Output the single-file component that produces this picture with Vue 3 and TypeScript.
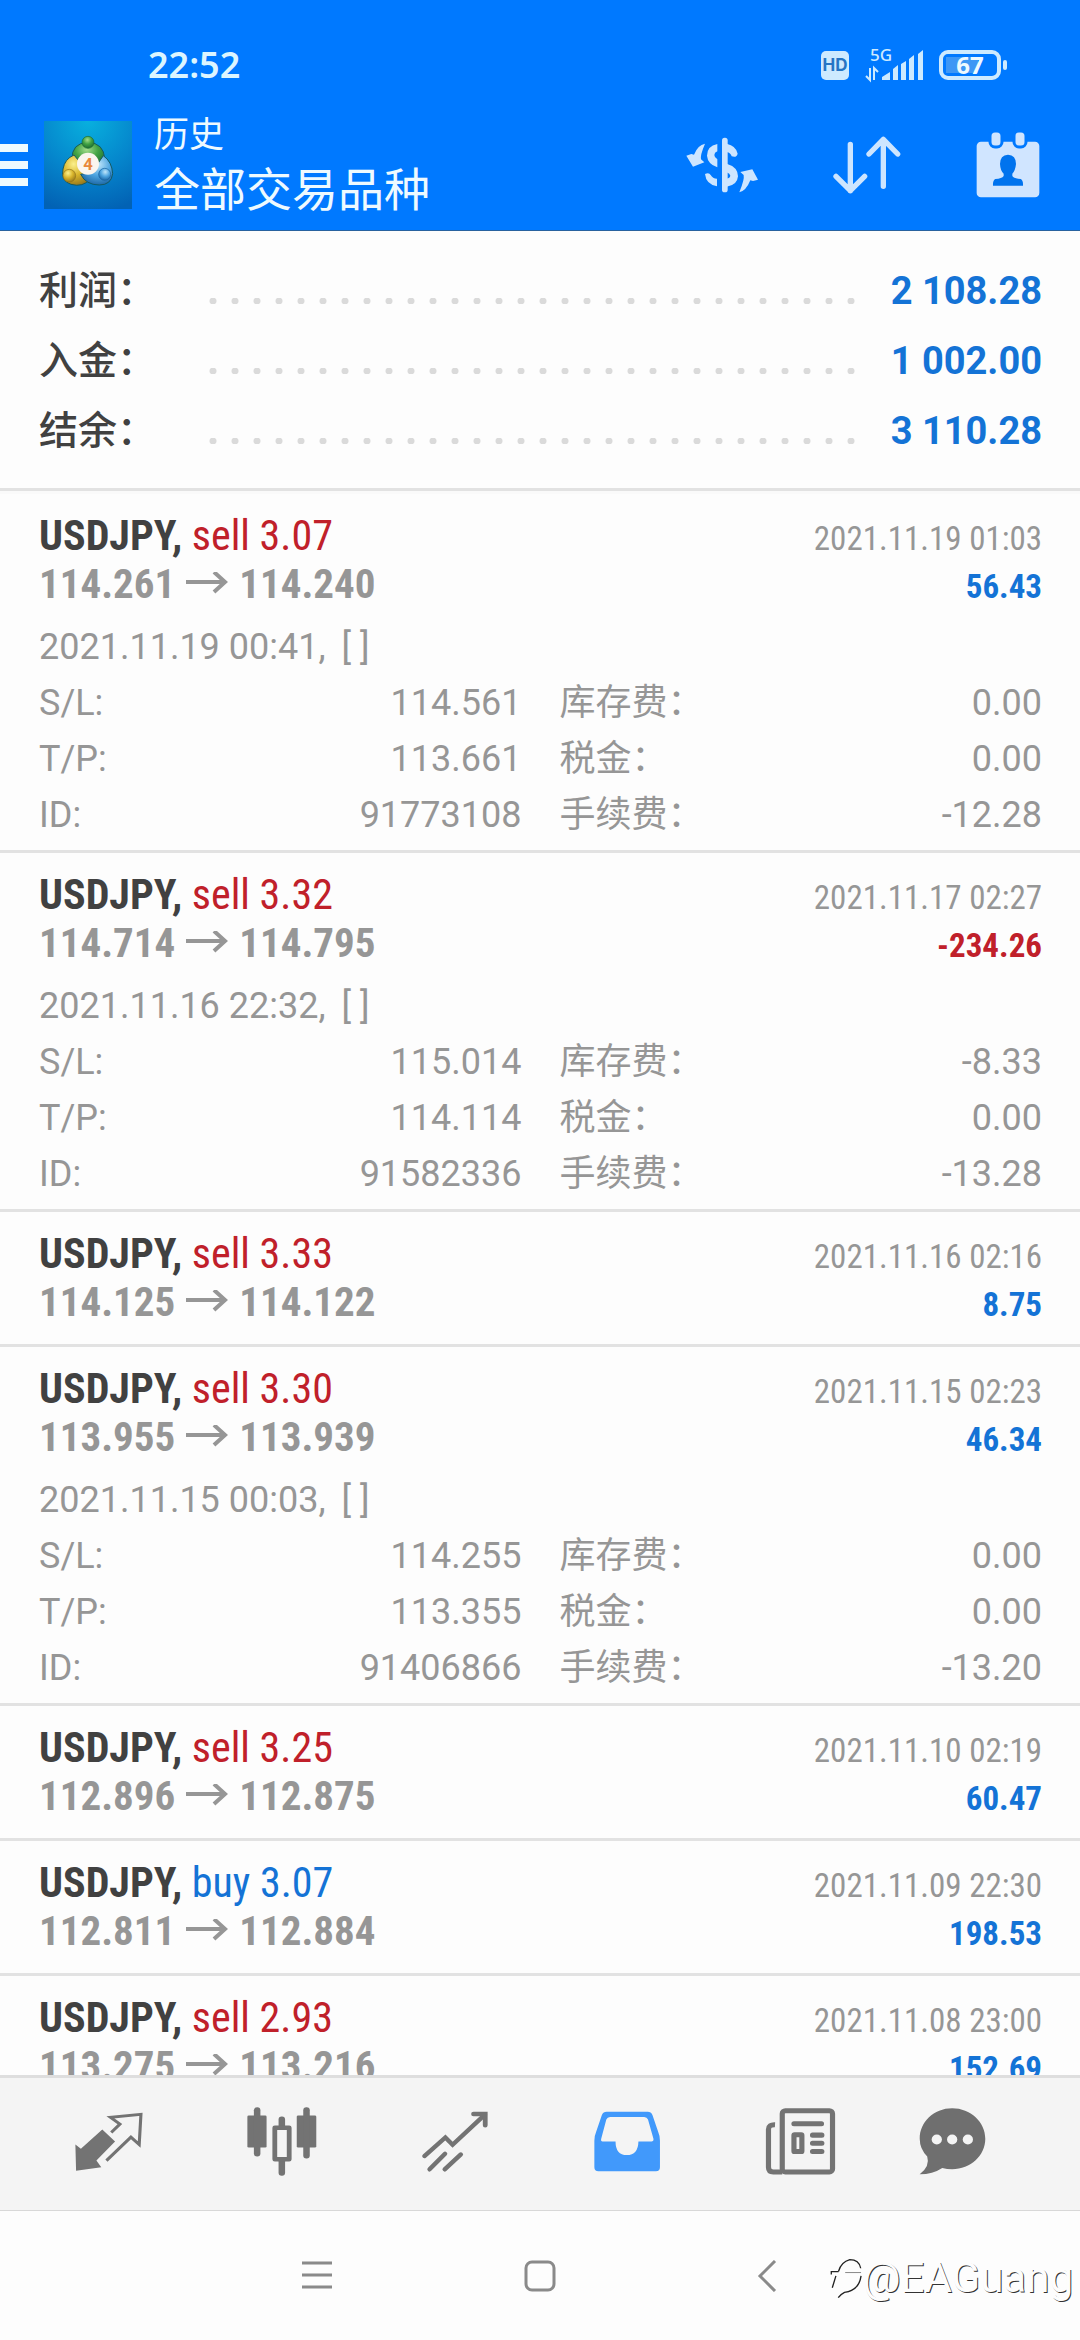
<script setup lang="ts">
interface Detail {
  opened: string
  sl: string
  tp: string
  id: string
  swap: string
  tax: string
  fee: string
}
interface Deal {
  side: 'buy' | 'sell'
  volume: string
  from: string
  to: string
  closed: string
  profit: string
  detail?: Detail
}

const summary = [
  { label: '利润：', value: '2 108.28' },
  { label: '入金：', value: '1 002.00' },
  { label: '结余：', value: '3 110.28' },
]

const deals: Deal[] = [
  {
    side: 'sell', volume: '3.07', from: '114.261', to: '114.240', closed: '2021.11.19 01:03', profit: '56.43',
    detail: { opened: '2021.11.19 00:41,', sl: '114.561', tp: '113.661', id: '91773108', swap: '0.00', tax: '0.00', fee: '-12.28' },
  },
  {
    side: 'sell', volume: '3.32', from: '114.714', to: '114.795', closed: '2021.11.17 02:27', profit: '-234.26',
    detail: { opened: '2021.11.16 22:32,', sl: '115.014', tp: '114.114', id: '91582336', swap: '-8.33', tax: '0.00', fee: '-13.28' },
  },
  { side: 'sell', volume: '3.33', from: '114.125', to: '114.122', closed: '2021.11.16 02:16', profit: '8.75' },
  {
    side: 'sell', volume: '3.30', from: '113.955', to: '113.939', closed: '2021.11.15 02:23', profit: '46.34',
    detail: { opened: '2021.11.15 00:03,', sl: '114.255', tp: '113.355', id: '91406866', swap: '0.00', tax: '0.00', fee: '-13.20' },
  },
  { side: 'sell', volume: '3.25', from: '112.896', to: '112.875', closed: '2021.11.10 02:19', profit: '60.47' },
  { side: 'buy', volume: '3.07', from: '112.811', to: '112.884', closed: '2021.11.09 22:30', profit: '198.53' },
  { side: 'sell', volume: '2.93', from: '113.275', to: '113.216', closed: '2021.11.08 23:00', profit: '152.69' },
]

function rows(d: Detail) {
  return [
    ['S/L:', d.sl, '库存费：', d.swap],
    ['T/P:', d.tp, '税金：', d.tax],
    ['ID:', d.id, '手续费：', d.fee],
  ]
}
</script>

<template>
  <div class="app">
    <header class="top">
      <div class="status">
        <time class="clock">22:52</time>
        <div class="indicators">
          <span class="hd">HD</span>
          <svg class="signal" width="58" height="48" viewBox="0 -8 58 48" aria-label="5G">
            <text x="5" y="12" class="net">5G</text>
            <path d="M5 19v12l-4-4M9 31V19l4 4" fill="none" stroke="#cdeaff" stroke-width="2" />
            <path d="M17 31v-3l8-5v8zM28 31V20l5-4v15zM36 31V15l5-3v19zM44 31V10l5-4v25zM53 31V5l5-4v30z" fill="#cdeaff" />
          </svg>
          <span class="battery"><span class="level">67</span></span>
        </div>
      </div>
      <div class="bar">
        <button class="menu" aria-label="菜单"><i></i><i></i><i></i></button>
        <svg class="logo" width="88" height="88" viewBox="0 0 264 264" aria-hidden="true">
          <defs>
            <radialGradient id="sky" cx="50%" cy="0%" r="105%">
              <stop offset="0" stop-color="#08b0de" />
              <stop offset=".55" stop-color="#0585cc" />
              <stop offset="1" stop-color="#0262b4" />
            </radialGradient>
            <radialGradient id="green" cx="45%" cy="30%" r="70%">
              <stop offset="0" stop-color="#a4dc8c" /><stop offset=".5" stop-color="#42a344" /><stop offset="1" stop-color="#1c6c33" />
            </radialGradient>
            <radialGradient id="gold" cx="40%" cy="30%" r="75%">
              <stop offset="0" stop-color="#fbf08c" /><stop offset=".5" stop-color="#d9b52c" /><stop offset="1" stop-color="#92741c" />
            </radialGradient>
            <radialGradient id="blue" cx="55%" cy="30%" r="75%">
              <stop offset="0" stop-color="#c0e6fa" /><stop offset=".5" stop-color="#4ea5e0" /><stop offset="1" stop-color="#17609f" />
            </radialGradient>
          </defs>
          <rect width="264" height="264" fill="url(#sky)" />
          <g stroke="#155a62" stroke-width="3">
            <path d="M84 116q-2-50 48-52q48 2 50 50q0 14-10 24l-38-10l-32 10q-16-8-18-22z" fill="url(#green)" />
            <path d="M90 102q-28 12-33 42q-8 36 24 46q36 10 58-16q-22-18-26-44z" fill="url(#gold)" />
            <path d="M178 104q26 18 28 54q-4 34-40 34q-40 0-56-32q38-4 50-30z" fill="url(#blue)" />
          </g>
          <circle cx="132" cy="64" r="18" fill="url(#green)" stroke="#1c6c33" stroke-width="2" />
          <circle cx="76" cy="164" r="19" fill="url(#gold)" stroke="#92741c" stroke-width="2" />
          <circle cx="182" cy="160" r="18" fill="url(#blue)" stroke="#17609f" stroke-width="2" />
          <circle cx="132" cy="128" r="33" fill="#fbf5ee" />
          <text x="132" y="146" class="four">4</text>
        </svg>
        <div class="heading">
          <p class="section">历史</p>
          <h1>全部交易品种</h1>
        </div>
        <div class="actions">
          <button aria-label="货币">
            <svg width="72" height="56" viewBox="78 76 216 168" fill="#cde5ff">
              <path d="M135 96q-22 4-33 33l-8-2-15 5 20 33 34-13-10-9q-3-12 12-47z" />
              <path d="M238 242q20-4 33-36l8 2 15-4-17-31-36 8 10 9q3 13-13 52z" />
              <rect x="186" y="78" width="17" height="164" rx="8" />
              <path d="M172 97q-31 6-31 35q2 25 31 35v-24q-9-5-9-13q0-7 9-11zM135 187q12-6 17 3q6 11 19 11v23q-33-6-36-37z" />
              <path d="M200 96q28 6 33 30q-3 13-18 8q-3-11-15-13zM200 156q34 10 34 38q-2 27-34 31v-24q10-2 11-9q-1-6-11-10z" />
            </svg>
          </button>
          <button aria-label="排序">
            <svg width="68" height="58" viewBox="514 76 204 174" fill="none" stroke="#cde5ff" stroke-width="16" stroke-linecap="round" stroke-linejoin="round">
              <path d="M566 101v139M523 197l43 43 43-43M665 227V86M622 130l43-44 43 44" />
            </svg>
          </button>
          <button aria-label="日期">
            <svg width="64" height="66" viewBox="948 64 192 198">
              <rect x="950" y="93" width="188" height="167" rx="13" fill="#d0e5ff" />
              <g fill="#d0e5ff" stroke="#0079ff" stroke-width="9">
                <rect x="990" y="61" width="36" height="48" rx="15" /><rect x="1062" y="61" width="36" height="48" rx="15" />
              </g>
              <path d="M1044 132q24 1 24 28q-2 20-11 29v7q5 8 25 9q8 4 7 20h-90q-1-16 7-20q20-1 25-9v-7q-10-9-11-29q0-27 24-28z" fill="#0073ee" />
            </svg>
          </button>
        </div>
      </div>
    </header>

    <main class="content">
      <dl class="summary">
        <div v-for="s in summary" :key="s.label" class="total">
          <dt>{{ s.label }}</dt>
          <i class="leader"></i>
          <dd>{{ s.value }}</dd>
        </div>
      </dl>

      <ul class="deals">
        <li v-for="d in deals" :key="d.closed" class="deal">
          <div class="line">
            <h2>USDJPY, <span :class="d.side">{{ d.side }} {{ d.volume }}</span></h2>
            <time class="closed">{{ d.closed }}</time>
          </div>
          <div class="line">
            <p class="prices">
              <span>{{ d.from }}</span>
              <svg width="42" height="24" viewBox="0 0 42 24" fill="none" stroke="#969696" stroke-width="4" aria-label="→">
                <path d="M0 10h39M28 0l11 10-11 10" />
              </svg>
              <span>{{ d.to }}</span>
            </p>
            <strong class="profit" :class="{ loss: d.profit.startsWith('-') }">{{ d.profit }}</strong>
          </div>
          <div v-if="d.detail" class="detail">
            <p class="opened">{{ d.detail.opened }}<span>[ ]</span></p>
            <dl v-for="r in rows(d.detail)" :key="r[0]" class="fields">
              <div><dt>{{ r[0] }}</dt><dd>{{ r[1] }}</dd></div>
              <div><dt>{{ r[2] }}</dt><dd>{{ r[3] }}</dd></div>
            </dl>
          </div>
        </li>
      </ul>
    </main>

    <nav class="tabs">
      <button aria-label="报价">
        <svg width="69" height="61" viewBox="214 455 200 182" preserveAspectRatio="none">
          <path d="M296 510l37 36-54 57 14 20-73 10-2-78 16 13z" fill="#737373" />
          <path d="M322 519l25-25-27-20 88-9-5 90-24-22-71 70" fill="none" stroke="#737373" stroke-width="9" />
        </svg>
      </button>
      <button aria-label="图表">
        <svg width="72" height="71" viewBox="712 440 210 212" preserveAspectRatio="none" fill="#737373">
          <rect x="716" y="468" width="56" height="96" rx="4" /><rect x="735" y="444" width="19" height="147" rx="9" />
          <rect x="860" y="468" width="57" height="96" rx="4" /><rect x="879" y="444" width="19" height="153" rx="9" />
          <rect x="807" y="471" width="19" height="40" rx="9" /><rect x="807" y="596" width="19" height="52" rx="9" />
          <rect x="796" y="505" width="42" height="94" fill="#f4f4f4" stroke="#737373" stroke-width="14" stroke-linejoin="round" />
        </svg>
      </button>
      <button aria-label="交易">
        <svg width="68" height="63" viewBox="1220 448 198 190" preserveAspectRatio="none" fill="none" stroke="#737373" stroke-width="13" stroke-linecap="round">
          <path d="M1230 587l61-56 21 22 94-91" /><path d="M1373 460h34v34" stroke-width="14" />
          <path d="M1245 627l45-47M1289 627l47-45" />
        </svg>
      </button>
      <button aria-label="历史" aria-current="page">
        <svg width="69" height="63" viewBox="154 448 202 190" preserveAspectRatio="none">
          <path d="M194 453h120q10 0 14 10l16 48q6 14 6 30v80q0 12-12 12H170q-12 0-12-12v-80q0-16 6-30l16-48q4-10 14-10z" fill="#4199fb" />
          <path d="M204 469h100q8 0 11 8l16 58q1 8-6 8h-38q-1 41-34 41t-33-41h-38q-6 0-4-8l15-58q3-8 11-8z" fill="#f4f4f4" />
        </svg>
      </button>
      <button aria-label="新闻">
        <svg width="73" height="69" viewBox="652 440 212 206" preserveAspectRatio="none" fill="none" stroke="#737373" stroke-width="15" stroke-linecap="round">
          <rect x="705" y="451" width="146" height="183" rx="9" />
          <path d="M684 493q-19-1-19 14v113q0 14 14 14h26" stroke-linecap="butt" />
          <path d="M739 490h80M793 524h27M793 548h27M793 573h27" />
          <rect x="739" y="523" width="23" height="50" rx="2" />
        </svg>
      </button>
      <button aria-label="信息">
        <svg width="69" height="69" viewBox="1098 440 202 206" preserveAspectRatio="none">
          <path d="M1198 444c54 0 97 41 97 91s-43 91-97 91q-15 0-29-4-28 19-66 19q31-24 22-53-22-23-22-53c0-50 41-91 95-91z" fill="#6f6f6f" />
          <g fill="#f4f4f4"><circle cx="1153" cy="537" r="15" /><circle cx="1198" cy="537" r="15" /><circle cx="1244" cy="537" r="15" /></g>
        </svg>
      </button>
    </nav>

    <footer class="system">
      <button aria-label="最近任务">
        <svg width="32" height="32" viewBox="0 0 32 32" fill="none" stroke="#8a8a8a" stroke-width="3"><path d="M1 3h30M1 15h30M1 27h30" /></svg>
      </button>
      <button aria-label="主屏幕">
        <svg width="32" height="32" viewBox="0 0 32 32" fill="none" stroke="#8a8a8a" stroke-width="3"><rect x="2" y="2" width="28" height="28" rx="6" /></svg>
      </button>
      <button aria-label="返回">
        <svg width="32" height="32" viewBox="0 0 32 32" fill="none" stroke="#8a8a8a" stroke-width="3"><path d="M28 1L13 16l15 15" /></svg>
      </button>
      <p class="mark">
        <svg width="33" height="41" viewBox="35 68 98 124" fill="none" stroke="#222" stroke-width="4" aria-hidden="true">
          <path d="M60 108q8-28 34-35q28 0 33 26M38 118v-9h22M52 122l-11 36M128 122q-6 44-50 50q-12 6-19 16" />
          <path d="M80 112h48" stroke="#888" stroke-width="3" />
        </svg>
        <span>@EAGuang</span>
      </p>
    </footer>
  </div>
</template>

<style>
body {
  margin: 0;
}
</style>

<style scoped>
.app {
  display: flex;
  flex-direction: column;
  height: 100vh;
  overflow: hidden;
  background: #fdfdfd;
  font-family: Roboto, "Noto Sans CJK SC", sans-serif;
  color: #414141;
}
h1, h2, p, dl, dd, ul {
  margin: 0;
  padding: 0;
  font-weight: 400;
}
button {
  display: flex;
  padding: 0;
  border: 0;
  background: none;
}
svg {
  display: block;
}
.top {
  background: #0079ff;
  border-bottom: 1px solid #28629f;
  color: #eefaff;
}
.status {
  display: flex;
  justify-content: space-between;
  align-items: center;
  height: 50px;
  padding: 40px 79px 0 148px;
}
.clock {
  font: 600 36px/50px "Noto Sans", sans-serif;
  color: #dcf5ff;
}
.indicators {
  display: flex;
  align-items: center;
  color: #cdeaff;
}
.hd {
  width: 28px;
  margin-right: 16px;
  border-radius: 5px;
  background: #cdeaff;
  color: #2675c4;
  font: 700 17px/29px Inter, sans-serif;
  text-align: center;
}
.net {
  font: 500 17px "Noto Sans", sans-serif;
  fill: #cdeaff;
}
.battery {
  position: relative;
  box-sizing: border-box;
  width: 62px;
  height: 30px;
  margin-left: 16px;
  padding: 3px;
  border: 4px solid #cdeaff;
  border-radius: 9px;
}
.battery::after {
  content: "";
  position: absolute;
  right: -10px;
  top: 6px;
  width: 4px;
  height: 10px;
  border-radius: 2px;
  background: #cdeaff;
}
.level {
  display: block;
  height: 16px;
  background: linear-gradient(90deg, #3d97f5 67%, transparent 67%);
  color: #eefaff;
  font: 700 24px/16px "Noto Sans", sans-serif;
  text-align: center;
}
.bar {
  display: flex;
  align-items: center;
  height: 130px;
  padding: 10px 40px 0 0;
}
.menu {
  flex-direction: column;
  gap: 9px;
  width: 28px;
  margin-right: 16px;
}
.menu i {
  width: 28px;
  height: 8px;
  background: #eefaff;
}
.four {
  font: 700 50px Roboto, sans-serif;
  fill: #e8883c;
  text-anchor: middle;
}
.heading {
  flex: 1;
  padding: 4px 0 0 22px;
}
.section {
  font-size: 35px;
  line-height: 46px;
}
h1 {
  font-size: 46px;
  line-height: 62px;
}
.actions {
  display: flex;
  align-items: center;
  gap: 75px;
}
.content {
  flex: 1;
  min-height: 0;
  overflow: hidden;
}
.summary {
  padding: 25px 38px 22px 39px;
  border-bottom: 3px solid #e2e2e2;
}
.total {
  display: flex;
  align-items: baseline;
  height: 70px;
  line-height: 70px;
}
.total dt {
  width: 163px;
  font-size: 39px;
  font-weight: 500;
}
.leader {
  flex: 1;
  height: 6px;
  margin-bottom: 6px;
  background: radial-gradient(circle, #dadada 3px, transparent 4px) 0 0 / 22px 6px;
}
.total dd {
  width: 179px;
  text-align: right;
  font-size: 38px;
  font-weight: 700;
  color: #1473d6;
}
.deals {
  list-style: none;
}
.deal {
  padding: 18px 38px 18px 39px;
  border-top: 3px solid #e2e2e2;
}
.deal:has(.detail) {
  padding-bottom: 7px;
}
.deal:first-child {
  border-top-color: #fafafa;
}
.line {
  display: flex;
  justify-content: space-between;
  align-items: baseline;
  height: 48px;
  font-family: "Roboto Condensed", "Liberation Sans Narrow", Roboto, sans-serif;
  line-height: 48px;
}
h2 {
  font-size: 42px;
  font-weight: 700;
}
h2 span {
  font-weight: 400;
}
.sell {
  color: #c0202a;
}
.buy {
  color: #1473d6;
}
.closed {
  font-size: 33px;
  color: #969696;
}
.prices {
  display: flex;
  align-items: center;
  gap: 11px;
  font-size: 41px;
  font-weight: 700;
  color: #969696;
}
.profit {
  font-size: 33px;
  color: #1473d6;
}
.profit.loss {
  color: #c0202a;
}
.detail {
  padding-top: 11px;
  font-size: 36px;
  line-height: 56px;
  color: #969696;
}
.opened span {
  margin-left: 16px;
}
.fields {
  display: grid;
  grid-template-columns: 1fr 1fr;
  gap: 38px;
}
.fields div {
  display: flex;
  justify-content: space-between;
}
.tabs {
  display: grid;
  grid-template-columns: repeat(5, 173fr) 131fr;
  align-items: center;
  height: 127px;
  padding: 0 62px 5px 22px;
  border-top: 3px solid #dedede;
  border-bottom: 1px solid #d8d8d8;
  background: #f4f4f4;
}
.tabs button {
  justify-content: center;
}
.system {
  position: relative;
  display: flex;
  justify-content: center;
  align-items: center;
  gap: 191px;
  height: 129px;
}
.mark {
  position: absolute;
  right: 7px;
  bottom: 34px;
  display: flex;
  align-items: center;
  font-size: 42px;
  line-height: 56px;
  color: #fdfdfd;
  text-shadow: 1px 1px 0 #333;
}
</style>
